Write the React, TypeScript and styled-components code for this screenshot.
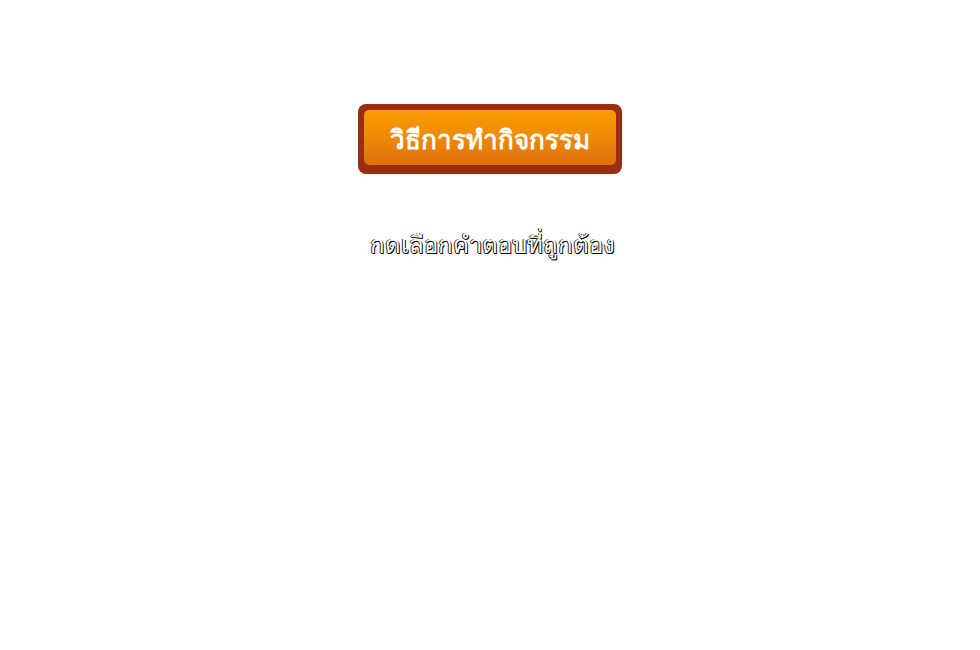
import React from "react";
import styled, { createGlobalStyle } from "styled-components";

const Global = createGlobalStyle`
  html, body { margin: 0; padding: 0; background: #ffffff; }
  body { font-family: "Noto Sans", "Liberation Sans", sans-serif; }
`;

const Page = styled.div`
  width: 980px;
  height: 650px;
  display: flex;
  flex-direction: column;
  align-items: center;
  padding-top: 104px;
  box-sizing: border-box;
`;

const HowToButton = styled.button`
  width: 264px;
  height: 70px;
  padding: 6px 6px 9px 6px;
  border: none;
  border-radius: 8px;
  background: #9b2e12;
  cursor: pointer;
  box-sizing: border-box;
  display: flex;
`;

const ButtonFace = styled.span`
  flex: 1;
  border-radius: 5px;
  background: linear-gradient(to bottom, #f99c04 0%, #ee8a08 50%, #de6f0c 100%);
  display: flex;
  align-items: center;
  justify-content: center;
  color: #ffffff;
  font-family: "Noto Sans", "Liberation Sans", sans-serif;
  font-weight: 700;
  font-size: 26px;
  line-height: 1;
  padding-top: 2px;
`;

const Instruction = styled.div`
  margin-top: 51px;
  margin-left: 4px;
  font-family: "Noto Sans", "Liberation Sans", sans-serif;
  font-size: 24px;
  color: #ffffff;
  text-shadow: 1px 1px 0 #000, -1px 0 0 #222, 0 1px 0 #000;
`;

export default function App() {
  return (
    <>
      <Global />
      <Page>
        <HowToButton>
          <ButtonFace>วิธีการทำกิจกรรม</ButtonFace>
        </HowToButton>
        <Instruction>กดเลือกคำตอบที่ถูกต้อง</Instruction>
      </Page>
    </>
  );
}
